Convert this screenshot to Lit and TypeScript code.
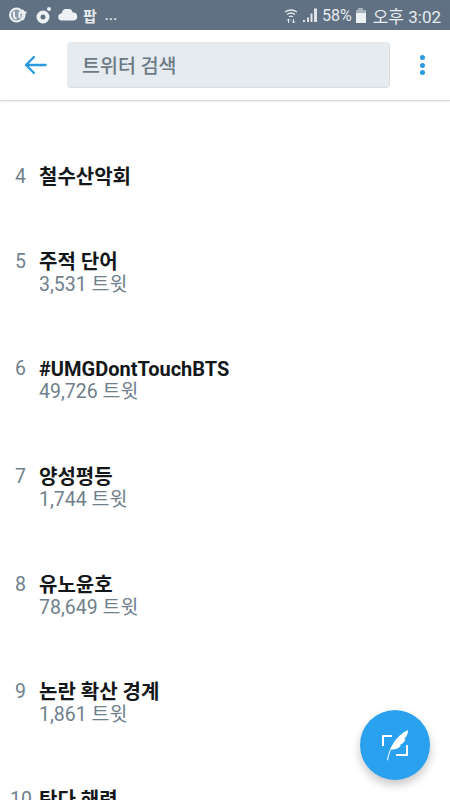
import { LitElement, html, css, svg } from "lit";
import { customElement } from "lit/decorators.js";

const trends = [
  { rank: 4, name: "철수산악회" },
  { rank: 5, name: "주적 단어", count: "3,531 트윗" },
  { rank: 6, name: "#UMGDontTouchBTS", count: "49,726 트윗" },
  { rank: 7, name: "양성평등", count: "1,744 트윗" },
  { rank: 8, name: "유노윤호", count: "78,649 트윗" },
  { rank: 9, name: "논란 확산 경계", count: "1,861 트윗" },
  { rank: 10, name: "탄다 해력" },
];

const wifi = svg`<svg width="14" height="16" viewBox="0 0 14 16" fill="none" stroke="#e4e8ec" stroke-width="1.3">
  <path d="M1 5Q7 1 13 5M3 7.500Q7 4.500 11 7.500M5 9.800Q7 8.400 9 9.800"/>
  <path d="M4.500 16V12M3 13.500l1.500-1.500L6 13.500M9.500 12V16M8 14.500l1.500 1.500 1.500-1.500" stroke-width="1"/>
</svg>`;

const signal = svg`<svg width="16" height="16" viewBox="0 0 16 16" fill="#dfe4e8">
  <rect x="1" y="13" width="2" height="2"/><rect x="5" y="10.500" width="2" height="4.500"/>
  <rect x="8.500" y="6.500" width="2" height="8.500"/><rect x="12" y="1.500" width="3" height="13.500"/>
</svg>`;

@customElement("app-root")
export class AppRoot extends LitElement {
  static styles = css`
    :host {
      display: block;
      font-family: Roboto, "Noto Sans CJK KR", sans-serif;
    }
    .page {
      position: relative;
      height: 800px;
      overflow: hidden;
      background: #fff;
      display: flex;
      flex-direction: column;
    }
    .status {
      height: 30px;
      flex: none;
      background: #5f7183;
      color: #e8ecef;
      display: flex;
      align-items: center;
      padding: 0 9px;
      font-size: 16px;
    }
    .status-left {
      display: flex;
      align-items: center;
      flex: 1;
    }
    .status-left svg {
      flex: none;
    }
    .status-right {
      display: flex;
      align-items: center;
      gap: 4px;
    }
    .han {
      font-size: 15px;
      font-weight: 700;
      margin-left: 5px;
    }
    .dots {
      font-size: 13px;
      margin-left: 8px;
      font-weight: 700;
      letter-spacing: 0.5px;
    }
    .batt {
      width: 10px;
      height: 15px;
      display: flex;
      flex-direction: column;
      align-items: center;
    }
    .batt i {
      width: 5px;
      height: 2px;
      background: #a9b4be;
    }
    .batt b {
      width: 10px;
      height: 13px;
      background: linear-gradient(#a9b4be 0 25%, #eef1f3 25%);
    }
    .clock {
      font-size: 17px;
      margin-left: 3px;
    }
    .toolbar {
      height: 71px;
      flex: none;
      box-sizing: border-box;
      display: flex;
      align-items: center;
      background: #fff;
      border-bottom: 1px solid #d4d8dc;
      box-shadow: 0 1px 2px rgba(0, 0, 0, 0.08);
      z-index: 2;
    }
    .back {
      width: 67px;
      flex: none;
      display: flex;
      justify-content: center;
      padding-left: 3px;
      box-sizing: border-box;
    }
    .search {
      width: 323px;
      height: 46px;
      box-sizing: border-box;
      background: #e6ebef;
      border-radius: 4px;
      border-bottom: 1px solid #d9dfe4;
      border-right: 1px solid #d9dfe4;
      display: flex;
      align-items: center;
      padding-left: 15px;
      color: #6c7a86;
      font-size: 19.5px;
      font-weight: 500;
    }
    .more {
      flex: 1;
      display: flex;
      flex-direction: column;
      align-items: center;
      gap: 2.6px;
      padding-left: 4px;
    }
    .more i {
      width: 5px;
      height: 5px;
      border-radius: 50%;
      background: #2a9ae0;
    }
    .list {
      display: flex;
      flex-direction: column;
      padding-top: 65px;
    }
    .item {
      display: flex;
      padding-left: 15px;
      margin-bottom: 62.7px;
    }
    .rank {
      width: 24px;
      flex: none;
      font-size: 19.5px;
      line-height: 22px;
      color: #6f7f8c;
    }
    .rank.wide {
      margin-left: -5px;
      width: 29px;
    }
    .name {
      font-size: 20px;
      line-height: 22px;
      font-weight: 700;
      color: #14171a;
    }
    .count {
      font-size: 19.5px;
      line-height: 23px;
      color: #6f7f8c;
    }
    .fab {
      position: absolute;
      left: 360px;
      top: 710px;
      width: 70px;
      height: 70px;
      border-radius: 50%;
      background: #2aa1ee;
      box-shadow: 0 5px 10px rgba(0, 0, 0, 0.22);
      display: flex;
      align-items: center;
      justify-content: center;
    }
  `;

  render() {
    return html`
      <div class="page">
        <div class="status">
          <div class="status-left">
            <svg width="19" height="16" viewBox="0 0 19 16" fill="none" stroke="#eef1f3">
              <circle cx="7.500" cy="8" r="6.500" fill="#8b9aa7" stroke-width="2"/>
              <path d="M5 4.500v4.500q0 2.500 2.500 2.500M10.500 11V5.500h7" stroke-width="2"/>
              <path d="M13 3a6 6 0 0 1 0 10" stroke-width="1.600"/>
            </svg>
            <svg style="margin-left:8px" width="16" height="18" viewBox="0 0 16 18" fill="#eef1f3">
              <circle cx="7" cy="11" r="4.500" fill="none" stroke="#eef1f3" stroke-width="4"/>
              <circle cx="13" cy="3" r="2"/>
            </svg>
            <svg style="margin-left:6px" width="20" height="12" viewBox="0 0 20 12" fill="#eef1f3">
              <path d="M4 11.500a3.500 3.500 0 0 1-.5-7A5.800 5.800 0 0 1 14.800 3.600 4 4 0 0 1 16 11.500z"/>
            </svg>
            <span class="han">팝</span>
            <span class="dots">...</span>
          </div>
          <div class="status-right">
            ${wifi}${signal}
            <span>58%</span>
            <div class="batt"><i></i><b></b></div>
            <span class="clock">오후 3:02</span>
          </div>
        </div>
        <div class="toolbar">
          <div class="back">
            <svg width="23" height="20" viewBox="0 0 23 20" fill="none" stroke="#2a9ae0" stroke-width="2.400" stroke-linecap="round" stroke-linejoin="round">
              <path d="M21.500 10H2M10 2l-8 8 8 8"/>
            </svg>
          </div>
          <div class="search">트위터 검색</div>
          <div class="more"><i></i><i></i><i></i></div>
        </div>
        <div class="list">
          ${trends.map(
            (t) => html`
              <div class="item">
                <div class="rank ${t.rank > 9 ? "wide" : ""}">${t.rank}</div>
                <div>
                  <div class="name">${t.name}</div>
                  ${t.count ? html`<div class="count">${t.count}</div>` : ""}
                </div>
              </div>
            `
          )}
        </div>
        <div class="fab">
          <svg width="28" height="32" viewBox="0 0 28 32" fill="none">
            <path d="M11 7H2v10M26 16v10H15" stroke="#fff" stroke-width="2"/>
            <path d="M6 31C8 20 14 7 27 1c0 4-1.500 7-4 9l1.500.300c-1 3-3.500 5-6 5.700l1.500.800c-3 3-6.500 4-10 3.700-1.500 3.500-2.500 7-3 11z" fill="#fff"/>
          </svg>
        </div>
      </div>
    `;
  }
}
